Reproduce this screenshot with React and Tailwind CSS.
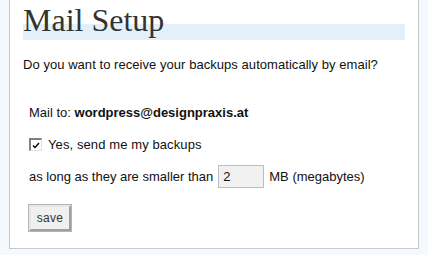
export default function App() {
  return (
    <div className="min-h-[255px] bg-[#f5f9fd] pl-[9px] pr-[9px] text-[#111] font-['Liberation_Sans',Arial,sans-serif]">
      <div className="h-[249px] border-x border-b border-[#c8c8c8] bg-white px-[13px]">
        <h2 className="h-[40px] text-[32px] leading-[40px] font-normal text-[#333] font-['Liberation_Serif','Times_New_Roman',serif] bg-[linear-gradient(to_bottom,transparent_24px,#e3f0fb_24px)]">
          Mail Setup
        </h2>
        <p className="mt-[17px] text-[13px] leading-[15px] tracking-[0.05px]">
          Do you want to receive your backups automatically by email?
        </p>
        <div className="pl-[6px]">
          <p className="mt-[33px] text-[13px] leading-[15px]">
            Mail to: <strong className="font-bold">wordpress@designpraxis.at</strong>
          </p>
          <label className="mt-[17px] flex items-center gap-[6px] text-[13px] leading-[15px] tracking-[0.1px]">
            <span className="flex h-[13px] w-[13px] items-center justify-center border-t-2 border-l-2 border-b border-r border-t-[#808080] border-l-[#808080] border-b-[#e0e0e0] border-r-[#e0e0e0] bg-white">
              <svg width="8" height="7" viewBox="0 0 8 7">
                <path d="M1 3.5 L3 5.5 L7 1" stroke="#000" strokeWidth="1.4" fill="none" />
              </svg>
            </span>
            Yes, send me my backups
          </label>
          <div className="mt-[13px] flex items-center gap-[5px] text-[13px] leading-[15px]">
            <span>as long as they are smaller than</span>
            <input
              defaultValue="2"
              className="h-[23px] w-[46px] border border-[#bdbdbd] bg-[#f1f1f1] px-[4px] text-[13px] outline-none"
            />
            <span>MB (megabytes)</span>
          </div>
          <button className="mt-[17px] h-[26px] w-[42px] border-2 border-t-[#e8e8e8] border-l-[#e8e8e8] border-b-[#a0a0a0] border-r-[#a0a0a0] bg-[#f0f0f0] text-[12px] tracking-[0.3px] text-[#333] outline outline-1 outline-[#b5b5b5]">
            save
          </button>
        </div>
      </div>
    </div>
  );
}
